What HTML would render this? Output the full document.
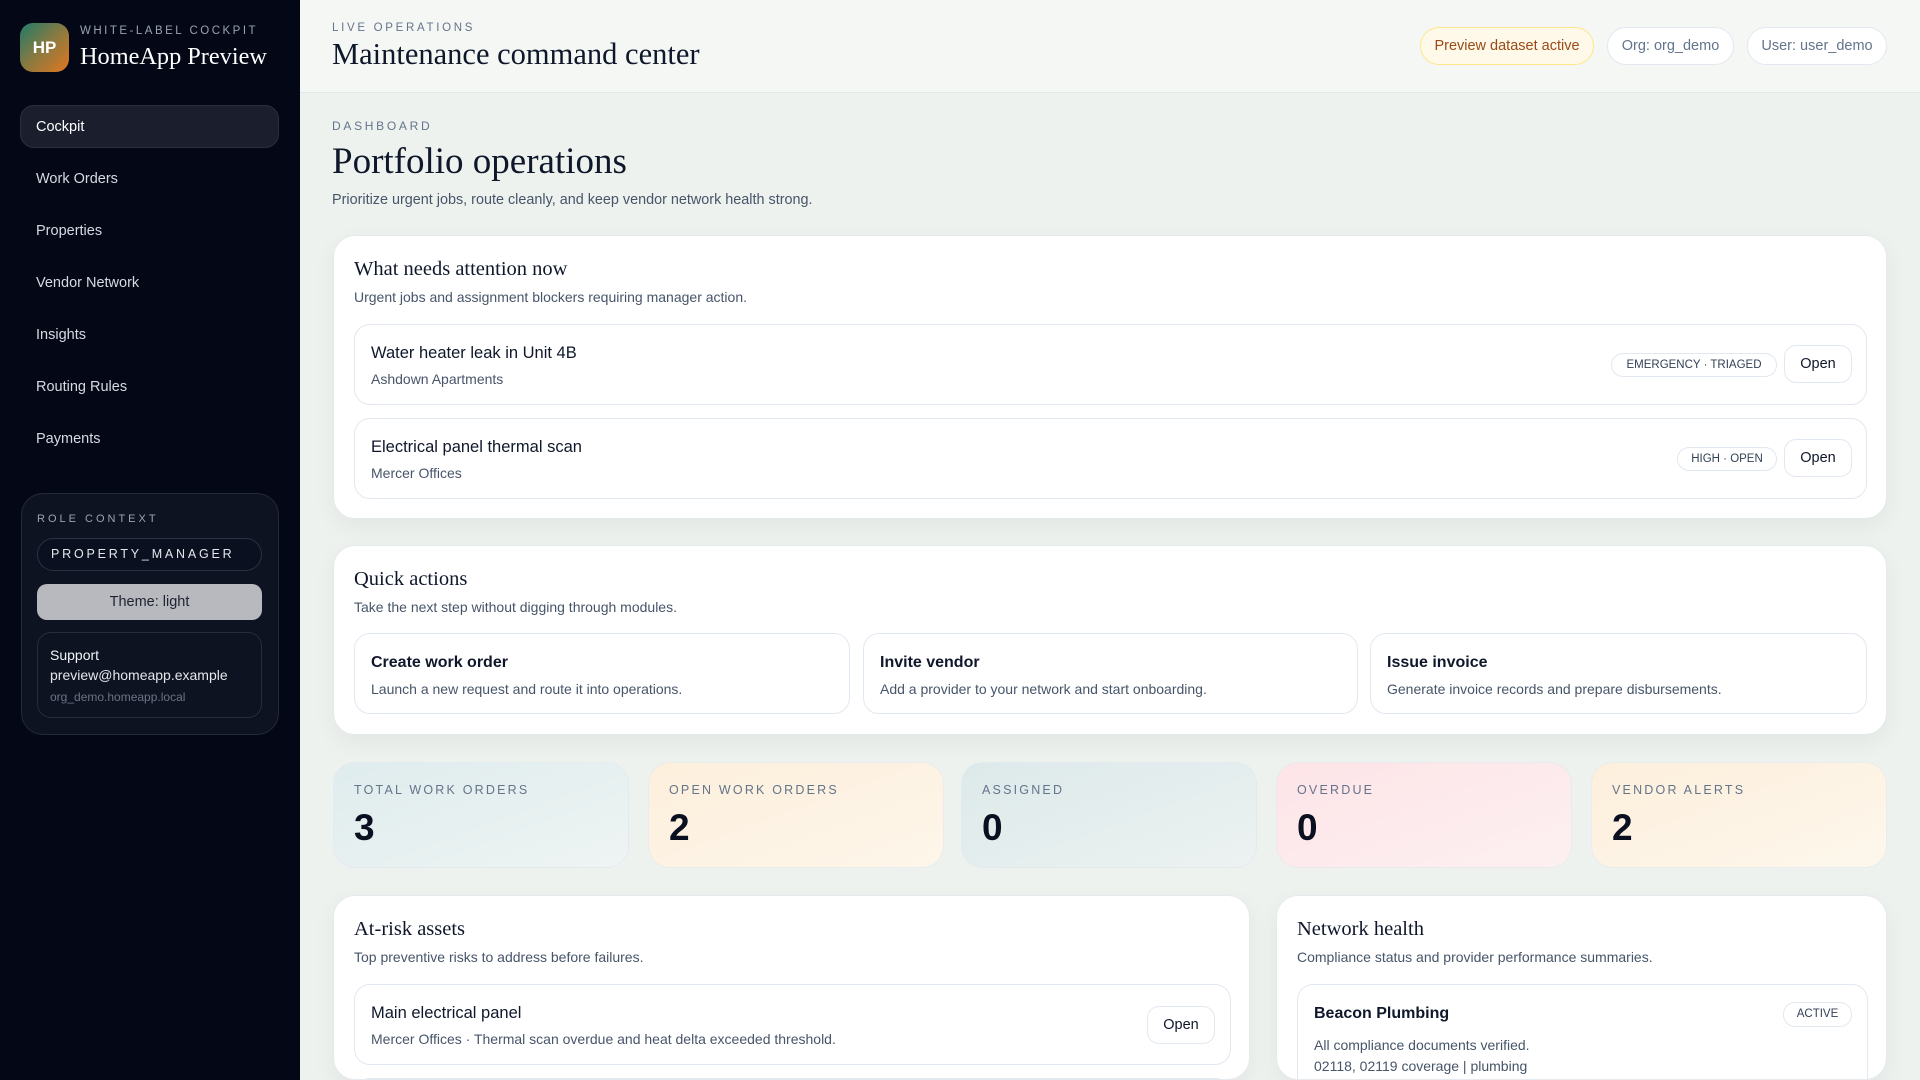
<!DOCTYPE html>
<html style="width:1920px;height:1080px;overflow:hidden"><head><meta charset="utf-8"><style>
*{box-sizing:border-box;margin:0;padding:0}
body{width:1920px;height:1080px;overflow:hidden;position:relative;font-family:"Liberation Sans",sans-serif;background:#eef2ee;color:#0f172a}
.a{position:absolute;white-space:nowrap}
.sb{position:absolute;left:0;top:0;width:300px;height:1080px;background:#030716}
.logo{left:20px;top:23px;width:49px;height:49px;border-radius:13px;background:linear-gradient(135deg,#1f7a6a 0%,#8a7a40 50%,#e2761f 100%);color:#fff;font-weight:bold;font-size:17px;line-height:49px;text-align:center}
.nav{left:36px;font-size:14.5px;color:#d6dae3;line-height:20px}
.hdr{position:absolute;left:300px;top:0;width:1620px;height:93px;background:#f5f7f5;border-bottom:1px solid #e2e8ea}
.pill{position:absolute;top:27px;height:38px;border-radius:19px;border:1px solid #e2e8f0;background:#fff;color:#64748b;font-size:14.5px;line-height:36px;text-align:center}
.card{position:absolute;background:#fff;border-radius:22px;border:1px solid #e5eaee;box-shadow:0 8px 24px rgba(15,23,42,.05);overflow:hidden}
.ser{font-family:"Liberation Serif",serif;color:#0f172a}
.sub{font-size:14px;color:#475569}
.row{position:absolute;border:1px solid #e2e8f0;border-radius:16px;background:#fff}
.badge{position:absolute;height:24px;border:1px solid #e2e8f0;border-radius:12px;font-size:11.5px;color:#334155;line-height:22px;text-align:center}
.btn{position:absolute;height:38px;width:68px;border:1px solid #e2e8f0;border-radius:12px;font-size:14.5px;color:#0f172a;line-height:36px;text-align:center;background:#fff}
.lbl{font-size:12.5px;letter-spacing:2.2px;color:#64748b}
.stat{position:absolute;top:762px;height:106px;width:296px;border-radius:22px;border:1px solid rgba(226,232,240,.7)}
.num{font-size:37px;font-weight:bold;color:#0b1020}
</style></head><body>
<div class="sb">
  <div class="a logo">HP</div>
  <div class="a" style="left:80px;top:25px;font-size:11.5px;letter-spacing:2.5px;color:#9aa3b2">WHITE-LABEL COCKPIT</div>
  <div class="a" style="left:80px;top:43px;font-family:'Liberation Serif',serif;font-size:24.3px;color:#fff">HomeApp Preview</div>
  <div class="a" style="left:20px;top:105px;width:259px;height:43px;border-radius:14px;background:#1b1e2d;border:1px solid #2b3040"></div>
  <div class="a nav" style="top:117px;color:#fff">Cockpit</div>
  <div class="a nav" style="top:169px">Work Orders</div>
  <div class="a nav" style="top:221px">Properties</div>
  <div class="a nav" style="top:273px">Vendor Network</div>
  <div class="a nav" style="top:325px">Insights</div>
  <div class="a nav" style="top:377px">Routing Rules</div>
  <div class="a nav" style="top:429px">Payments</div>
  <div class="a" style="left:21px;top:493px;width:258px;height:242px;border-radius:22px;background:#0e1322;border:1px solid #232a3a"></div>
  <div class="a" style="left:37px;top:513px;font-size:11px;letter-spacing:3px;color:#9aa3b2">ROLE CONTEXT</div>
  <div class="a" style="left:37px;top:538px;width:225px;height:33px;border-radius:17px;border:1px solid #2a3142;background:#0b1020;color:#e5e7eb;font-size:12.5px;letter-spacing:2.8px;line-height:31px;padding-left:13px">PROPERTY_MANAGER</div>
  <div class="a" style="left:37px;top:584px;width:225px;height:36px;border-radius:10px;background:#b8b9be;color:#1f2433;font-size:14.5px;line-height:36px;text-align:center">Theme: light</div>
  <div class="a" style="left:37px;top:632px;width:225px;height:86px;border-radius:14px;border:1px solid #262d3d;background:#0e1322"></div>
  <div class="a" style="left:50px;top:647px;font-size:14px;color:#f1f5f9">Support</div>
  <div class="a" style="left:50px;top:667px;font-size:14px;color:#e5e7eb">preview@homeapp.example</div>
  <div class="a" style="left:50px;top:690px;font-size:12px;color:#6b7384">org_demo.homeapp.local</div>
</div>
<div class="hdr">
  <div class="a" style="left:32px;top:22px;font-size:11.5px;letter-spacing:2.7px;color:#64748b">LIVE OPERATIONS</div>
  <div class="a ser" style="left:32px;top:37px;font-size:30.5px">Maintenance command center</div>
  <div class="pill" style="left:1120px;width:174px;background:#fef9e8;border-color:#fde68a;color:#9a4a16">Preview dataset active</div>
  <div class="pill" style="left:1307px;width:127px">Org: org_demo</div>
  <div class="pill" style="left:1447px;width:140px">User: user_demo</div>
</div>
<div class="a" style="left:332px;top:119px;font-size:12px;letter-spacing:2.7px;color:#64748b">DASHBOARD</div>
<div class="a ser" style="left:332px;top:140px;font-size:37px">Portfolio operations</div>
<div class="a sub" style="left:332px;top:192px;font-size:14.4px">Prioritize urgent jobs, route cleanly, and keep vendor network health strong.</div>

<div class="card" style="left:333px;top:235px;width:1554px;height:284px">
  <div class="a ser" style="left:20px;top:22px;font-size:20.5px">What needs attention now</div>
  <div class="a sub" style="left:20px;top:53px">Urgent jobs and assignment blockers requiring manager action.</div>
  <div class="row" style="left:20px;top:88px;width:1513px;height:81px">
    <div class="a" style="left:16px;top:19px;font-size:16.5px">Water heater leak in Unit 4B</div>
    <div class="a sub" style="left:16px;top:46px">Ashdown Apartments</div>
    <div class="badge" style="left:1256px;top:28px;width:166px">EMERGENCY · TRIAGED</div>
    <div class="btn" style="left:1429px;top:20px">Open</div>
  </div>
  <div class="row" style="left:20px;top:182px;width:1513px;height:81px">
    <div class="a" style="left:16px;top:19px;font-size:16.5px">Electrical panel thermal scan</div>
    <div class="a sub" style="left:16px;top:46px">Mercer Offices</div>
    <div class="badge" style="left:1322px;top:28px;width:100px">HIGH · OPEN</div>
    <div class="btn" style="left:1429px;top:20px">Open</div>
  </div>
</div>

<div class="card" style="left:333px;top:545px;width:1554px;height:190px">
  <div class="a ser" style="left:20px;top:22px;font-size:20.5px">Quick actions</div>
  <div class="a sub" style="left:20px;top:53px">Take the next step without digging through modules.</div>
  <div class="row" style="left:20px;top:87px;width:496px;height:81px"><div class="a" style="left:16px;top:20px;font-size:16px;font-weight:bold">Create work order</div><div class="a sub" style="left:16px;top:47px">Launch a new request and route it into operations.</div></div>
  <div class="row" style="left:529px;top:87px;width:495px;height:81px"><div class="a" style="left:16px;top:20px;font-size:16px;font-weight:bold">Invite vendor</div><div class="a sub" style="left:16px;top:47px">Add a provider to your network and start onboarding.</div></div>
  <div class="row" style="left:1036px;top:87px;width:497px;height:81px"><div class="a" style="left:16px;top:20px;font-size:16px;font-weight:bold">Issue invoice</div><div class="a sub" style="left:16px;top:47px">Generate invoice records and prepare disbursements.</div></div>
</div>

<div class="stat" style="left:333px;background:linear-gradient(160deg,#dfeced,#eef4f3)"><div class="a lbl" style="left:20px;top:20px">TOTAL WORK ORDERS</div><div class="a num" style="left:20px;top:44px">3</div></div>
<div class="stat" style="left:648px;background:linear-gradient(160deg,#fdefdc,#fdf6ea)"><div class="a lbl" style="left:20px;top:20px">OPEN WORK ORDERS</div><div class="a num" style="left:20px;top:44px">2</div></div>
<div class="stat" style="left:961px;background:linear-gradient(160deg,#dde9ea,#ecf2f1)"><div class="a lbl" style="left:20px;top:20px">ASSIGNED</div><div class="a num" style="left:20px;top:44px">0</div></div>
<div class="stat" style="left:1276px;background:linear-gradient(160deg,#fde4e7,#fdf0f1)"><div class="a lbl" style="left:20px;top:20px">OVERDUE</div><div class="a num" style="left:20px;top:44px">0</div></div>
<div class="stat" style="left:1591px;background:linear-gradient(160deg,#fdefdc,#fdf7ec)"><div class="a lbl" style="left:20px;top:20px">VENDOR ALERTS</div><div class="a num" style="left:20px;top:44px">2</div></div>

<div class="card" style="left:333px;top:895px;width:917px;height:185px">
  <div class="a ser" style="left:20px;top:22px;font-size:20.5px">At-risk assets</div>
  <div class="a sub" style="left:20px;top:53px">Top preventive risks to address before failures.</div>
  <div class="row" style="left:20px;top:88px;width:877px;height:81px">
    <div class="a" style="left:16px;top:19px;font-size:16.5px">Main electrical panel</div>
    <div class="a sub" style="left:16px;top:46px">Mercer Offices · Thermal scan overdue and heat delta exceeded threshold.</div>
    <div class="btn" style="left:792px;top:21px">Open</div>
  </div>
  <div class="row" style="left:20px;top:182px;width:877px;height:81px"></div>
</div>
<div class="card" style="left:1276px;top:895px;width:611px;height:185px">
  <div class="a ser" style="left:20px;top:22px;font-size:20.5px">Network health</div>
  <div class="a sub" style="left:20px;top:53px">Compliance status and provider performance summaries.</div>
  <div class="row" style="left:20px;top:88px;width:571px;height:140px">
    <div class="a" style="left:16px;top:20px;font-size:16px;font-weight:bold">Beacon Plumbing</div>
    <div class="badge" style="left:485px;top:17px;width:69px;height:25px">ACTIVE</div>
    <div class="a sub" style="left:16px;top:52px">All compliance documents verified.</div>
    <div class="a sub" style="left:16px;top:73px">02118, 02119 coverage | plumbing</div>
  </div>
</div>
</body></html>
